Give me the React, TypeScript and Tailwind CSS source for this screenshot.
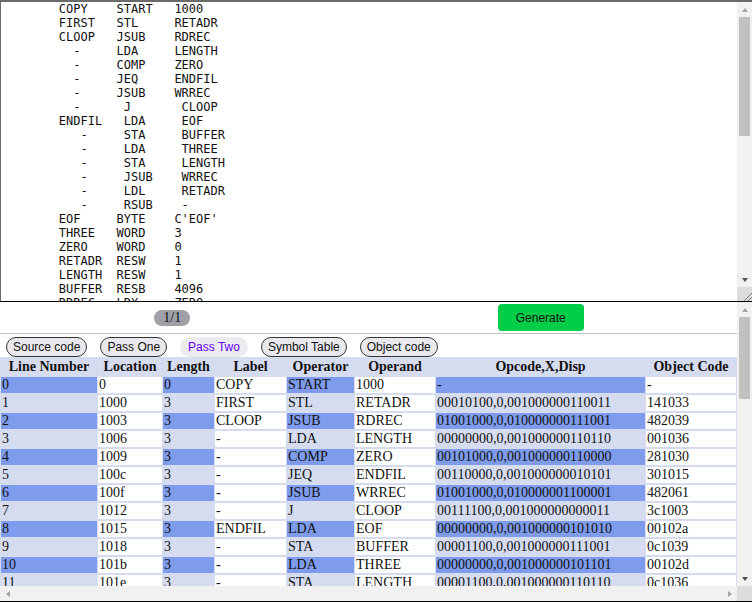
import { useState } from 'react';

const source = [
  '\tCOPY\tSTART\t1000',
  '\tFIRST\tSTL\tRETADR',
  '\tCLOOP\tJSUB\tRDREC',
  '\t  -\tLDA\tLENGTH',
  '\t  -\tCOMP\tZERO',
  '\t  -\tJEQ\tENDFIL',
  '\t  -\tJSUB\tWRREC',
  '\t  -\t J\t CLOOP',
  '\tENDFIL\t LDA\t EOF',
  '\t   -\t STA\t BUFFER',
  '\t   -\t LDA\t THREE',
  '\t   -\t STA\t LENGTH',
  '\t   -\t JSUB\t WRREC',
  '\t   -\t LDL\t RETADR',
  '\t   -\t RSUB\t -',
  "\tEOF\tBYTE\tC'EOF'",
  '\tTHREE\tWORD\t3',
  '\tZERO\tWORD\t0',
  '\tRETADR\tRESW\t1',
  '\tLENGTH\tRESW\t1',
  '\tBUFFER\tRESB\t4096',
  '\tRDREC\tLDX\tZERO',
  '\t  -\tLDA\tZERO',
  '\tRLOOP\tTD\tINPUT',
  '\t  -\tJEQ\tRLOOP',
  '\t  -\tRD\tINPUT',
  '\t  -\tCOMP\tZERO',
  '\t  -\tJEQ\tEXIT',
  '\t  -\tSTCH\tBUFFER,X',
  '\t  -\tTIX\tMAXLEN',
  '\t  -\tJLT\tRLOOP',
  '\tEXIT\tSTX\tLENGTH',
  '\t  -\tRSUB\t -',
  "\tINPUT\tBYTE\tX'F1'",
  '\tMAXLEN\tWORD\t4096',
  '\tWRREC\tLDX\tZERO',
  '\tWLOOP\tTD\tOUTPUT',
  '\t  -\tJEQ\tWLOOP',
  '\t  -\tLDCH\tBUFFER,X',
  '\t  -\tWD\tOUTPUT',
  '\t  -\tTIX\tLENGTH',
  '\t  -\tJLT\tWLOOP',
  '\t  -\tRSUB\t -',
  "\tOUTPUT\tBYTE\tX'05'",
  '\t  -\tEND\tFIRST',
].join('\n');

const opcodes: Record<string, number> = {
  STL: 0x14, JSUB: 0x48, LDA: 0x00, COMP: 0x28, JEQ: 0x30, J: 0x3c, STA: 0x0c,
  LDL: 0x08, RSUB: 0x4c, LDX: 0x04, TD: 0xe0, RD: 0xd8, STCH: 0x54, TIX: 0x2c,
  JLT: 0x38, STX: 0x10, LDCH: 0x50, WD: 0xdc,
};

const symbols: Record<string, number> = {
  CLOOP: 0x1003, ENDFIL: 0x1015, EOF: 0x102a, THREE: 0x102d, ZERO: 0x1030,
  RETADR: 0x1033, LENGTH: 0x1036, BUFFER: 0x1039, RDREC: 0x2039, RLOOP: 0x203f,
  EXIT: 0x2057, INPUT: 0x205d, MAXLEN: 0x205e, WRREC: 0x2061, WLOOP: 0x2064,
  OUTPUT: 0x2079,
};

// loc, length, label, operator, operand, object code (for data)
const rows: [number, number, string, string, string, string?][] = [
  [0, 0, 'COPY', 'START', '1000', '-'],
  [0x1000, 3, 'FIRST', 'STL', 'RETADR'],
  [0x1003, 3, 'CLOOP', 'JSUB', 'RDREC'],
  [0x1006, 3, '-', 'LDA', 'LENGTH'],
  [0x1009, 3, '-', 'COMP', 'ZERO'],
  [0x100c, 3, '-', 'JEQ', 'ENDFIL'],
  [0x100f, 3, '-', 'JSUB', 'WRREC'],
  [0x1012, 3, '-', 'J', 'CLOOP'],
  [0x1015, 3, 'ENDFIL', 'LDA', 'EOF'],
  [0x1018, 3, '-', 'STA', 'BUFFER'],
  [0x101b, 3, '-', 'LDA', 'THREE'],
  [0x101e, 3, '-', 'STA', 'LENGTH'],
  [0x1021, 3, '-', 'JSUB', 'WRREC'],
  [0x1024, 3, '-', 'LDL', 'RETADR'],
  [0x1027, 3, '-', 'RSUB', '-'],
  [0x102a, 3, 'EOF', 'BYTE', "C'EOF'", '454f46'],
  [0x102d, 3, 'THREE', 'WORD', '3', '000003'],
  [0x1030, 3, 'ZERO', 'WORD', '0', '000000'],
  [0x1033, 3, 'RETADR', 'RESW', '1', '-'],
  [0x1036, 3, 'LENGTH', 'RESW', '1', '-'],
  [0x1039, 4096, 'BUFFER', 'RESB', '4096', '-'],
  [0x2039, 3, 'RDREC', 'LDX', 'ZERO'],
  [0x203c, 3, '-', 'LDA', 'ZERO'],
  [0x203f, 3, 'RLOOP', 'TD', 'INPUT'],
  [0x2042, 3, '-', 'JEQ', 'RLOOP'],
  [0x2045, 3, '-', 'RD', 'INPUT'],
  [0x2048, 3, '-', 'COMP', 'ZERO'],
  [0x204b, 3, '-', 'JEQ', 'EXIT'],
  [0x204e, 3, '-', 'STCH', 'BUFFER,X'],
  [0x2051, 3, '-', 'TIX', 'MAXLEN'],
  [0x2054, 3, '-', 'JLT', 'RLOOP'],
  [0x2057, 3, 'EXIT', 'STX', 'LENGTH'],
  [0x205a, 3, '-', 'RSUB', '-'],
  [0x205d, 1, 'INPUT', 'BYTE', "X'F1'", 'f1'],
  [0x205e, 3, 'MAXLEN', 'WORD', '4096', '001000'],
  [0x2061, 3, 'WRREC', 'LDX', 'ZERO'],
  [0x2064, 3, 'WLOOP', 'TD', 'OUTPUT'],
  [0x2067, 3, '-', 'JEQ', 'WLOOP'],
  [0x206a, 3, '-', 'LDCH', 'BUFFER,X'],
  [0x206d, 3, '-', 'WD', 'OUTPUT'],
  [0x2070, 3, '-', 'TIX', 'LENGTH'],
  [0x2073, 3, '-', 'JLT', 'WLOOP'],
  [0x2076, 3, '-', 'RSUB', '-'],
  [0x2079, 1, 'OUTPUT', 'BYTE', "X'05'", '05'],
  [0x207a, 0, '-', 'END', 'FIRST', '-'],
];

function encode(op: string, operand: string) {
  const code = opcodes[op];
  if (code === undefined) return null;
  const indexed = operand.endsWith(',X');
  const sym = operand.replace(',X', '');
  const addr = symbols[sym] ?? 0;
  const bits = `${code.toString(2).padStart(8, '0')},${indexed ? 1 : 0},${addr.toString(2).padStart(15, '0')}`;
  const obj = ((code << 16) | (indexed ? 0x8000 : 0) | addr).toString(16).padStart(6, '0');
  return { bits, obj };
}

const headers = ['Line Number', 'Location', 'Length', 'Label', 'Operator', 'Operand', 'Opcode,X,Disp', 'Object Code'];
const widths = ['w-[96px]', 'w-[64px]', 'w-[51px]', 'w-[71px]', 'w-[67px]', 'w-[80px]', 'w-[209px]', 'w-[90px]'];
const tabs = ['Source code', 'Pass One', 'Pass Two', 'Symbol Table', 'Object code'];

// scrollbar arrows drawn as css triangles
function ArrowUp() {
  return <div className="w-0 h-0 border-x-[3.5px] border-x-transparent border-b-[4px] border-b-[#a3a3a3]" />;
}
function ArrowDown() {
  return <div className="w-0 h-0 border-x-[3.5px] border-x-transparent border-t-[4px] border-t-[#505050]" />;
}

function VScroll({ thumb, className = '' }: { thumb: number; className?: string }) {
  return (
    <div className={`w-[15px] shrink-0 flex flex-col bg-[#f1f1f1] ${className}`}>
      <div className="h-[15px] shrink-0 flex items-center justify-center">
        <ArrowUp />
      </div>
      <div className="flex-1 px-[2px]">
        <div className="bg-[#c1c1c1]" style={{ height: thumb }} />
      </div>
      <div className="h-[15px] shrink-0 flex items-center justify-center">
        <ArrowDown />
      </div>
    </div>
  );
}

export default function App() {
  const [tab, setTab] = useState('Pass Two');

  return (
    <div className="flex flex-col w-[752px] h-[602px] overflow-hidden bg-white">
      {/* source editor */}
      <div className="flex h-[301px] shrink-0 border-t-2 border-l border-[#6b6b6b]">
        <textarea
          defaultValue={source}
          spellCheck={false}
          className="flex-1 h-full resize-none overflow-hidden bg-white text-[#111] text-[12px] leading-[14px] font-['DejaVu_Sans_Mono',monospace] [tab-size:8] whitespace-pre outline-none"
        />
        <div className="w-[15px] shrink-0 flex flex-col">
          <VScroll thumb={119} className="flex-1" />
          <div className="h-[14px] shrink-0 bg-[#dcdcdc] flex items-end justify-end">
            <svg width="10" height="10" viewBox="0 0 10 10">
              <path d="M2 10 L10 2 M6 10 L10 6" stroke="#777" strokeWidth="1" />
            </svg>
          </div>
        </div>
      </div>

      {/* output panel */}
      <div className="flex flex-col h-[301px] shrink-0 border-y border-black">
        <div className="flex flex-1 min-h-0">
          <div className="w-[737px] overflow-hidden">
            <div className="flex h-[31px] items-center">
              <div className="w-1/2 flex justify-center pr-[24px]">
                <span className="h-[16px] px-[9px] rounded-full bg-[#9fa0a8] text-[14px] leading-[16px] text-[#111] font-['Liberation_Serif',serif]">
                  1/1
                </span>
              </div>
              <div className="w-1/2 flex justify-center pr-[24px]">
                <button className="w-[86px] h-[27px] rounded-[4px] bg-[#00cd48] text-[12px] text-[#111] font-['Liberation_Sans',Arial,sans-serif]">
                  Generate
                </button>
              </div>
            </div>

            <div className="h-px bg-[#c0c0c0]" />

            <div className="flex gap-[13px] pl-[6px] mt-[3px]">
              {tabs.map((t) => (
                <button
                  key={t}
                  onClick={() => setTab(t)}
                  className={
                    t === tab
                      ? "h-[20px] px-[7px] rounded-full border border-transparent bg-[#ebebef] text-[12px] text-[#6600ff] font-['Liberation_Sans',Arial,sans-serif]"
                      : "h-[20px] px-[6px] rounded-full border border-[#333] bg-[#e9e9ed] text-[12px] text-[#111] font-['Liberation_Sans',Arial,sans-serif]"
                  }
                >
                  {t}
                </button>
              ))}
            </div>

            <table className="w-[737px] table-fixed border-separate border-spacing-x-[1px] border-spacing-y-[2px] bg-[#d6dcf0] text-[14px] leading-[16px] text-[#111] font-['Liberation_Serif',serif]">
              <thead>
                <tr>
                  {headers.map((h, i) => (
                    <th key={h} className={`${widths[i]} p-0 font-bold text-center whitespace-nowrap`}>
                      {h}
                    </th>
                  ))}
                </tr>
              </thead>
              <tbody>
                {rows.map(([loc, len, label, op, operand, data], i) => {
                  const enc = encode(op, operand);
                  const cells = [
                    String(i),
                    loc.toString(16),
                    String(len),
                    label,
                    op,
                    operand,
                    enc ? enc.bits : '-',
                    data ?? (enc ? enc.obj : '-'),
                  ];
                  return (
                    <tr key={i}>
                      {cells.map((c, j) => (
                        <td
                          key={j}
                          className={`px-px py-0 whitespace-nowrap overflow-hidden ${
                            j % 2 === 1 ? 'bg-white' : i % 2 === 0 ? 'bg-[#7e9bec]' : ''
                          }`}
                        >
                          {c}
                        </td>
                      ))}
                    </tr>
                  );
                })}
              </tbody>
            </table>
          </div>
          <VScroll thumb={82} />
        </div>

        {/* horizontal scrollbar */}
        <div className="flex h-[15px] shrink-0 bg-[#f1f1f1]">
          <div className="w-[15px] flex items-center justify-center">
            <div className="w-0 h-0 border-y-[3.5px] border-y-transparent border-r-[4px] border-r-[#a3a3a3]" />
          </div>
          <div className="flex-1" />
          <div className="w-[15px] flex items-center justify-center">
            <div className="w-0 h-0 border-y-[3.5px] border-y-transparent border-l-[4px] border-l-[#a3a3a3]" />
          </div>
          <div className="w-[15px] bg-[#dcdcdc]" />
        </div>
      </div>
    </div>
  );
}
